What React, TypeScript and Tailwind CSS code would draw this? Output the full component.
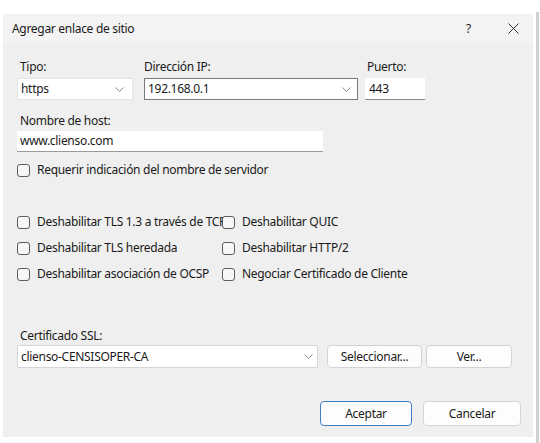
import React from "react";

const font = { fontFamily: '"Noto Sans", "Open Sans", sans-serif', letterSpacing: "-0.3px" };

function Chevron() {
  return (
    <svg width="9" height="5" viewBox="0 0 9 5" className="shrink-0">
      <path d="M0.5 0.5 L4.5 4.5 L8.5 0.5" fill="none" stroke="#8a8a8a" strokeWidth="1" />
    </svg>
  );
}

function Check({ label, className = "" }: { label: string; className?: string }) {
  return (
    <div className={"flex items-center h-[16px] " + className}>
      <div className="relative z-10 w-[13px] h-[13px] shrink-0 rounded-[3px] border border-[#5c5c5c] bg-[#f7f7f7]" />
      <span className="ml-[7px] whitespace-nowrap text-[12px] leading-[16px] text-[#1a1a1a]">{label}</span>
    </div>
  );
}

export default function App() {
  return (
    <div className="w-[540px] h-[443px] bg-white flex overflow-hidden text-[#1a1a1a] tracking-[-0.3px]" style={{ fontFamily: font.fontFamily }}>
      <div className="ml-[3px] mt-[14px] w-[530px] h-[423px] bg-[#efefef] flex flex-col">
        {/* title bar */}
        <div className="h-[29px] bg-[#f3f3f3] flex items-center pl-[9px] pr-[14px]">
          <span className="text-[12px] leading-[16px]">Agregar enlace de sitio</span>
          <span className="ml-auto text-[12px] leading-[16px] mr-[37px]">?</span>
          <svg width="11" height="11" viewBox="0 0 11 11">
            <path d="M0.5 0.5 L10.5 10.5 M10.5 0.5 L0.5 10.5" stroke="#333" strokeWidth="1" />
          </svg>
        </div>

        <div className="pl-[14px] flex flex-col">
          {/* labels row */}
          <div className="flex mt-[16px] h-[16px] text-[12px] leading-[16px]">
            <div className="w-[127px] pl-[3px]">Tipo:</div>
            <div className="w-[221px]">Dirección IP:</div>
            <div className="pl-[2px]">Puerto:</div>
          </div>
          {/* inputs row */}
          <div className="flex mt-[3px] h-[22px]">
            <div className="w-[116px] h-[22px] bg-white border border-[#e4e4e4] flex items-center pl-[3px] pr-[8px] text-[12px]">
              <span>https</span>
              <span className="ml-auto"><Chevron /></span>
            </div>
            <div className="ml-[11px] w-[214px] h-[22px] bg-white border border-[#7a7a7a] flex items-center pl-[3px] pr-[6px] text-[12px]">
              <span>192.168.0.1</span>
              <span className="ml-auto"><Chevron /></span>
            </div>
            <div className="ml-[7px] w-[60px] h-[22px] bg-white border-b border-[#8a8a8a] flex items-center pl-[4px] text-[12px]">
              443
            </div>
          </div>

          {/* host */}
          <div className="mt-[13px] h-[16px] pl-[3px] text-[12px] leading-[16px]">Nombre de host:</div>
          <div className="mt-[2px] w-[306px] h-[21px] bg-white border-b border-[#9a9a9a] flex items-center pl-[3px] text-[12px]">
            www.clienso.com
          </div>
          <Check label="Requerir indicación del nombre de servidor" className="mt-[10px]" />

          {/* options grid */}
          <div className="mt-[36px] grid grid-cols-[205px_1fr] gap-y-[10px]">
            <Check label="Deshabilitar TLS 1.3 a través de TCP" />
            <Check label="Deshabilitar QUIC" />
            <Check label="Deshabilitar TLS heredada" />
            <Check label="Deshabilitar HTTP/2" />
            <Check label="Deshabilitar asociación de OCSP" />
            <Check label="Negociar Certificado de Cliente" />
          </div>

          {/* certificate */}
          <div className="mt-[46px] h-[16px] pl-[3px] text-[12px] leading-[16px]">Certificado SSL:</div>
          <div className="mt-[1px] flex h-[23px]">
            <div className="w-[301px] h-[23px] bg-white border border-[#d6d6d6] rounded-[2px] flex items-center pl-[3px] pr-[4px] text-[12px]">
              <span>clienso-CENSISOPER-CA</span>
              <span className="ml-auto"><Chevron /></span>
            </div>
            <button className="ml-[9px] w-[95px] h-[23px] bg-[#fdfdfd] border border-[#d4d4d4] rounded-[4px] text-[12px]">
              Seleccionar...
            </button>
            <button className="ml-[4px] w-[86px] h-[23px] bg-[#fdfdfd] border border-[#d4d4d4] rounded-[4px] text-[12px]">
              Ver...
            </button>
          </div>

          {/* footer */}
          <div className="mt-[33px] flex">
            <button className="ml-[303px] w-[92px] h-[25px] bg-[#fdfdfd] border border-[#3d7fc4] rounded-[4px] text-[12px]">
              Aceptar
            </button>
            <button className="ml-[11px] w-[98px] h-[25px] bg-[#fdfdfd] border border-[#d4d4d4] rounded-[4px] text-[12px]">
              Cancelar
            </button>
          </div>
        </div>
      </div>
      <div className="ml-[3px] mt-[12px] w-[3px] h-[431px] bg-[#d0d0d0]" />
    </div>
  );
}
